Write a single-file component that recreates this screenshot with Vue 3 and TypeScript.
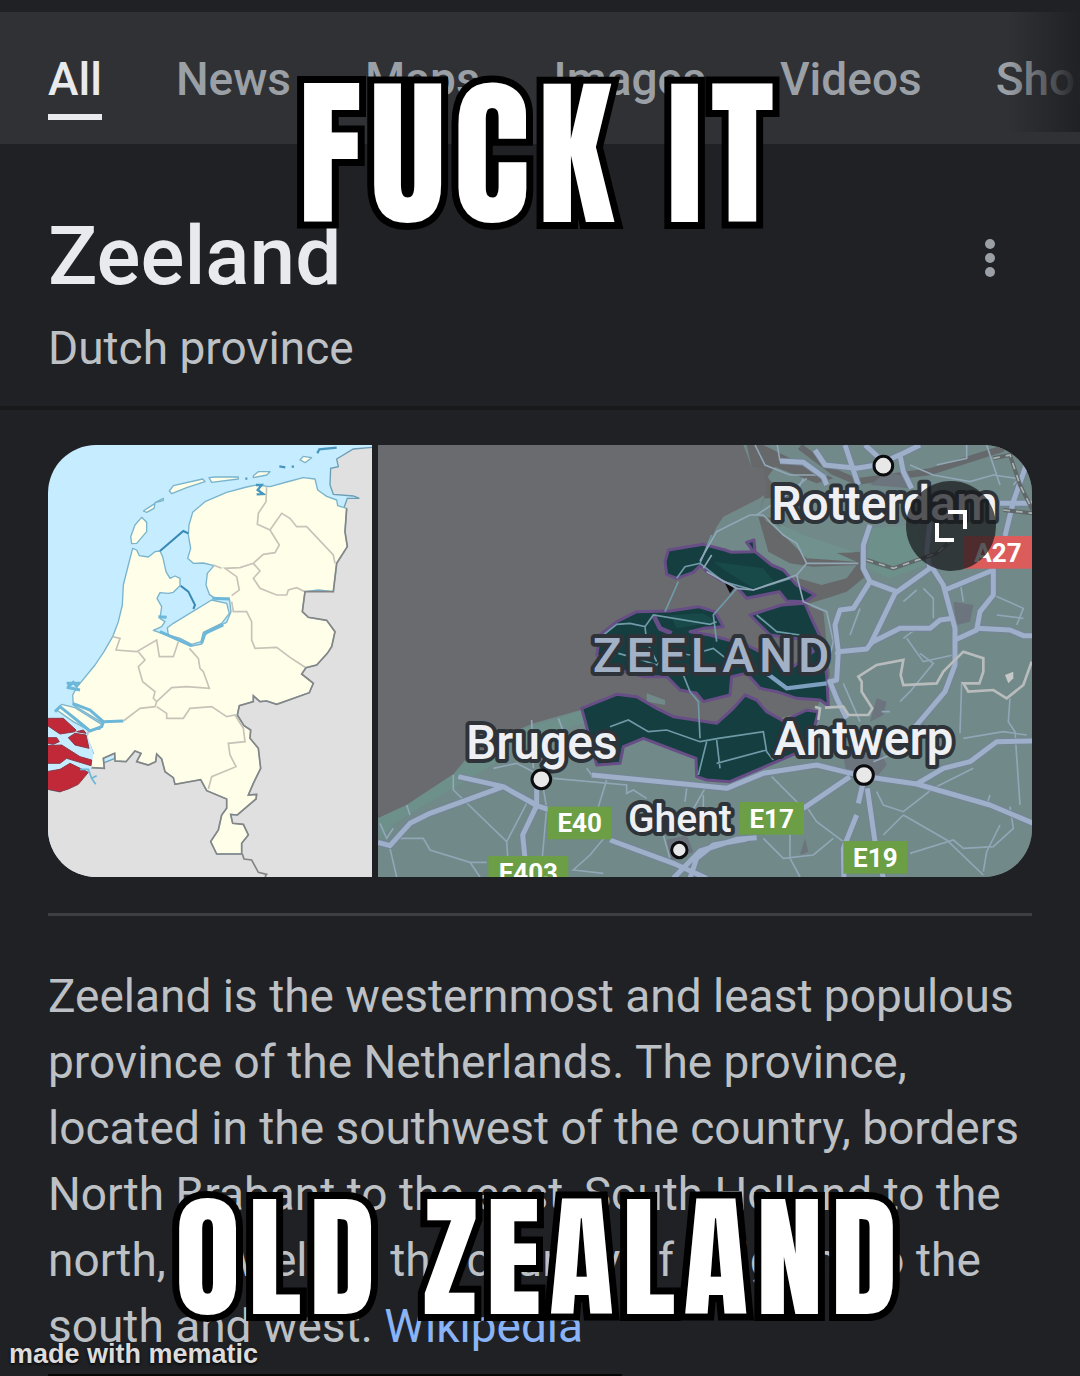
<script setup lang="ts">
interface Tab {
  label: string
  active?: boolean
}

interface Place {
  name: string
  x: number
  y: number
  size: number
  dot: { x: number; y: number; r: number }
}

interface Shield {
  name: string
  x: number
  y: number
  width: number
  color: string
}

const tabs: Tab[] = [
  { label: 'All', active: true },
  { label: 'News' },
  { label: 'Maps' },
  { label: 'Images' },
  { label: 'Videos' },
  { label: 'Shopping' },
]

const places: Place[] = [
  { name: 'Rotterdam', x: 1204, y: 256, size: 144, dot: { x: 1540, y: 92, r: 28 } },
  { name: 'Bruges', x: 288, y: 972, size: 144, dot: { x: 514, y: 1033, r: 28 } },
  { name: 'Antwerp', x: 1212, y: 959, size: 144, dot: { x: 1482, y: 1020, r: 28 } },
  { name: 'Ghent', x: 774, y: 1190, size: 117, dot: { x: 928, y: 1245, r: 23 } },
]

const shields: Shield[] = [
  { name: 'E40', x: 533, y: 1115, width: 192, color: '#6b9e45' },
  { name: 'E403', x: 355, y: 1263, width: 240, color: '#6b9e45' },
  { name: 'E17', x: 1108, y: 1101, width: 194, color: '#6b9e45' },
  { name: 'E19', x: 1420, y: 1218, width: 192, color: '#6b9e45' },
  { name: 'A27', x: 1782, y: 303, width: 204, color: '#dc5b5b' },
]

// Motorways on the regional map
const motorways: string[] = [
  'M24 1222 60 1232 120 1165 180 1135 400 1055 500 1110 M265 1025 400 1055 500 1112 540 1125 M720 1215 910 1285 1010 1330',
  'M500 1112 458 1200 465 1270 M500 1112 500 1060',
  'M665 1020 950 1048 1070 1060 1180 1015 1340 990 1430 1012 1490 1025 1640 1047 1860 1110 1990 1165',
  'M1640 1047 1720 1000 1800 980 1880 920 1990 918',
  'M1300 1120 1440 1025 M1130 1212 1030 1230 980 1270 960 1330 M1160 1208 1100 1213 990 1248 910 1330',
  'M1480 1040 1465 1105 M1460 1140 1420 1240 1422 1330 M1492 1060 1515 1220 1540 1330',
  'M1430 850 1400 790 1380 740 1400 735 1405 650 1395 570 1410 525 1450 520 1500 440 1480 400 1480 330 1500 270',
  'M1500 440 1580 470 M1500 630 1575 475 1680 400 M1680 400 1670 350 1680 260',
  'M1685 395 1720 450 1755 580 1755 690 1725 770 1640 870 1590 920 M1725 465 1870 405 1870 480 1830 530 1820 585 1755 615',
  'M1500 625 1590 580 1680 580 1710 555 1750 550 M1820 580 1920 585 1960 602 1990 602',
  'M1905 303 1930 200 1965 100 1990 60 M1890 205 1990 205',
  'M1230 78 1300 82 1360 125 1370 150 M1335 45 1365 90 1460 100 1520 90 1600 55 1650 30 M1425 30 1465 150 M1485 30 1540 80 M1590 60 1600 110 1625 160 M1400 660 1405 650 1490 642 1515 610',
]

// Secondary roads and waterways
const minorRoads: string[] = [
  'M110 1110 120 1140 M30 1165 50 1210 70 1180 M90 1210 160 1210 180 1245 300 1282 350 1282 M60 1240 80 1326 M300 1282 330 1326',
  'M250 1020 250 1065 410 1220 415 1290 M410 1220 470 1105 M485 855 490 1000 M520 1060 530 1120 515 1290',
  'M550 1030 770 1050 770 1075 790 1065 830 1090 M710 1035 685 1115 M710 1200 660 1260 610 1305 700 1315 M650 1000 665 1020',
  'M370 1000 440 985 490 1010 M565 850 580 890 M880 1200 900 1270 M950 1060 945 1100 M1005 1060 960 1140 M1000 1080 1000 1190 1070 1160',
  'M1205 1025 1280 1100 1260 1160 1260 1270 1290 1326 M1180 1210 1240 1270 1330 1260 1390 1210 M1310 1115 1340 1160 1420 1220',
  'M1520 1070 1540 1110 1600 1130 1690 1060 1810 1000 M1600 1140 1730 1215 1840 1320 M1600 1140 1540 1200 M1620 1255 1750 1215 1780 1240 1870 1235 1930 1180 1920 1115',
  'M1840 1310 1850 1250 1890 1170 M1860 1080 1850 1110 M1950 1110 1935 890 1915 860 1920 790 M1780 910 1900 890 1970 900 M1770 895 1775 740',
  'M1650 655 1690 685 1620 770 1590 800 M1420 745 1470 860 M1535 830 1560 830 M1575 915 1560 960 1510 980',
  'M1025 360 1000 400 M990 378 1040 290 1140 240 1180 240 1240 300 1280 325 1310 385 1465 385 M1160 240 1250 180 1310 130 M1310 385 1280 420 1150 465 1100 460 1010 410',
  'M1155 30 1185 90 1260 120 1370 120 M1700 90 1790 70 1790 30 M1620 90 1690 120 1800 140 1870 120 1940 130 M1850 30 1890 150',
  'M1380 660 1390 620 1370 530 1300 500 1280 420 M1660 460 1690 490 1690 550 M1770 440 1780 500 M1870 480 1960 520 1940 570 M1880 540 1960 550 M1610 610 1660 680 1750 660',
  'M1220 20 1230 78 M1640 465 1600 500 M1440 600 1470 520 M1930 150 1990 80 M1600 610 1640 580 M1300 130 1270 190',
]

const provinceRoads: string[] = [
  'M920 430 945 395 990 385 1025 300 M990 385 1060 440 1150 465 1260 430 M1100 460 1030 540 1040 620',
  'M700 600 740 568 780 565 825 575 850 540 1020 568 1040 560 M825 575 830 620 860 680 M885 530 925 440',
  'M745 655 800 670 860 690 900 650 960 660 1030 640 1080 680 M940 720 960 770 985 800 990 910',
  'M720 875 775 855 835 890 890 885 990 920 1045 910 1180 890 1190 950 1210 975 M1040 915 1050 1000 M1010 920 985 1020 M1040 985 1190 945',
  'M1160 540 1220 590 1290 600',
]
</script>

<template>
  <main class="page">
    <nav class="tabs" aria-label="Search categories">
      <a
        v-for="tab in tabs"
        :key="tab.label"
        href="#"
        class="tab"
        :class="{ active: tab.active }"
        :aria-current="tab.active ? 'page' : undefined"
      >{{ tab.label }}</a>
    </nav>

    <header class="heading">
      <div class="titles">
        <h1>Zeeland</h1>
        <p class="subtitle">Dutch province</p>
      </div>
      <button class="more" type="button" aria-label="More options">
        <svg viewBox="0 0 12 38" aria-hidden="true">
          <circle cx="6" cy="5" r="5" />
          <circle cx="6" cy="19" r="5" />
          <circle cx="6" cy="33" r="5" />
        </svg>
      </button>
    </header>

    <section class="knowledge">
      <div class="maps">
        <!-- Locator map of the Netherlands -->
        <svg class="locator" viewBox="24 30 972 1296" preserveAspectRatio="xMidYMid slice" role="img" aria-label="Zeeland in the Netherlands">
          <rect x="24" y="30" width="972" height="1296" fill="#c6ecff" />
          <path
            d="M10 1060 60 1070 155 998 400 900 900 230 912 218 922 190 958 190 940 183 880 178 870 150 872 100 895 95 890 72 940 42 1010 36V1340H10Z"
            fill="#e0e0e0" stroke="#6b9db5" stroke-width="4"
          />
          <path
            class="coast"
            d="M278 340 290 345 298 362 325 366 345 350 360 348 368 365 378 410 390 430 405 423 420 430 420 452 400 472 385 475 360 473 351 490 365 515 360 550 375 560 365 575 340 586 380 600 412 612 455 633 485 627 492 602 520 580 560 562 573 530 568 490 525 490 508 478 498 450 502 415 522 392 490 384 460 385 443 370 452 340 445 300 447 270 458 232 495 200 560 172 620 156 650 150 690 155 740 141 790 128 825 132 833 165 860 184 890 195 893 212 920 220 915 290 922 335 890 385 880 470 835 465 795 470 787 530 805 547 860 556 885 590 875 635 862 655 830 690 798 698 785 717 820 745 808 773 710 808 680 798 660 800 640 782 640 800 598 812 592 840 612 872 632 885 630 910 655 940 662 1000 640 1045 625 1080 650 1078 648 1092 592 1140 572 1138 578 1165 610 1168 625 1200 605 1225 605 1257 530 1257 512 1220 535 1185 545 1140 560 1120 560 1092 500 1067 482 1034 405 1048 400 1028 375 1010 365 972 350 957 347 980 325 990 290 980 303 955 285 948 258 980 225 978 224 955 190 970 193 1000 155 998 145 965 160 955 140 905 145 890 190 865 100 810 98 780 112 755 165 690 192 650 218 605 235 560 247 510 250 450 265 390Z"
          />
          <path class="coast" d="M382 578 400 565 515 495 560 505 568 535 545 565 490 592 483 620 455 628 420 610 385 600Z" />
          <path class="coast" d="M305 247 320 262 320 290 290 325 275 326 272 305 285 270ZM388 168 400 152 488 132 495 140 440 158 395 176ZM507 128 525 126 595 126 595 132 515 142ZM310 228 345 205 342 220 320 232ZM345 203 370 190 370 197ZM640 122 655 110 690 110 680 120 640 128ZM780 75 790 64 815 68 795 83ZM50 825 65 808 105 818 185 868 180 882 145 885 100 860Z" />
          <path d="M718 94 736 97M755 95 762 95M832 55 838 43 890 38M616 131 622 131M648 150 665 150 653 165 670 177 650 178" fill="none" stroke="#4796bd" stroke-width="7" />
          <path d="M360 348 430 288 445 295 M422 452 445 470 465 510 460 522" fill="none" stroke="#3789b4" stroke-width="6" />
          <path d="M98 805 150 825 190 860 250 858M85 755 100 742 112 755M80 745 120 745M80 757 120 765M45 830 60 815 110 855 150 888 185 875 190 862M517 490 570 492M355 545 380 547M485 625 495 595 550 570M360 590 455 633" fill="none" stroke="#6db7d8" stroke-width="9" />
          <path
            d="M140 905 145 890M680 155 678 200 655 235 652 268 690 285 718 330 705 353 670 358 640 385 600 398 555 400 590 425 598 465 575 482M545 400 520 390M690 285 725 235 750 250 770 275 800 275 880 360 885 385M640 385 660 408 640 430 660 460 710 480 740 480 745 465 770 458 795 470M575 500 580 530 620 530 635 560 635 615 645 640 710 637 750 667 785 690 798 698M218 605 240 610 228 645 290 650 350 615 358 665 400 665 415 620M448 640 475 670 480 700 490 710 508 760 440 755 395 758 350 800 340 790 345 770 308 740 295 695 315 675 295 650M250 858 300 820 345 815 350 800M350 815 380 835 380 850 430 850 450 820 515 815 560 845 585 840 610 880 615 920 565 925 570 960 588 995 515 1025 505 1062"
            fill="none" stroke="#c8c3b9" stroke-width="5"
          />
          <path
            d="M920 220 915 290 922 335 890 385 880 470 795 470 787 530 805 547 860 556 885 590 875 635 862 655 830 690 798 698 785 717 820 745 808 773 710 808 680 798 660 800 640 782 640 800 598 812 592 840 612 872 632 885 630 910 655 940 662 1000 640 1045 625 1080 650 1078 648 1092 592 1140 572 1138 578 1165 610 1168 625 1200 605 1225 605 1257 530 1257 512 1220 535 1185 545 1140 560 1120 560 1092 500 1067 482 1034 405 1048 400 1028 375 1010 365 972 350 957 347 980 325 990 290 980 303 955 285 948 258 980 225 978 224 955 190 970 193 1000 155 998M607 1257 612 1272 635 1275 655 1312 680 1318 675 1326"
            fill="none" stroke="#858585" stroke-width="5"
          />
          <path d="M24 1060 24 850 75 850 110 885 140 895 160 955 155 998 145 1018Z" fill="#c6ecff" />
          <path
            d="M20 850 70 850 108 885 105 890 60 897 20 870ZM20 908 50 908 58 920 40 928 20 925ZM85 908 105 895 138 900 147 940 105 930ZM20 932 65 930 120 965 155 975 153 992 80 970 60 985 20 985ZM20 1010 60 1003 90 985 145 1012 115 1048 85 1062 60 1070 20 1062ZM110 890 138 895 130 885Z"
            fill="#c12838" stroke="#8d3848" stroke-width="3"
          />
          <path d="M120 1003 145 1003 155 1030 167 1048M155 1030 170 1022" fill="none" stroke="#6db7d8" stroke-width="5" />
        </svg>

        <!-- Regional map centred on Zeeland -->
        <div class="region">
          <svg viewBox="24 30 1962 1296" preserveAspectRatio="xMidYMid slice" role="img" aria-label="Map of Zeeland, Rotterdam, Bruges, Ghent and Antwerp">
            <rect x="24" y="30" width="1962" height="1296" fill="#6a6b6e" />
            <path
              d="M24 1150 110 1110 250 1018 285 975 430 890 490 865 650 820 1000 920 1340 800 1350 650 1320 500 990 385 1040 275 1060 245 1165 192 1215 160 1180 105 1145 95 1120 30H1990V1326H24Z"
              fill="#718989"
            />
            <path d="M24 1150 110 1110 250 1018 285 980 430 890 640 825 650 860 480 920 300 1030 80 1160 30 1210ZM1500 280 1640 270 1670 390 1560 430 1490 400Z" fill="#6d908b" />
            <path
              d="M1130 30 1180 30 1260 70 1390 130 1340 145 1215 95 1190 130 1270 190 1180 190 1165 245 1210 250 1370 355 1475 350 1475 390 1485 425 1430 470 1370 490 1320 505 1270 425 1355 450 1430 430 1460 390 1330 395 1260 385 1195 350 1165 245 1190 160 1180 105 1145 95Z"
              fill="#66686a"
            />
            <path d="M1215 258 1250 290 1370 355 1455 352 1420 340 1300 300ZM1180 250 1240 300 1310 370 1460 380 1380 345Z" fill="#70918d" />
            <path d="M1290 35 1390 110 1460 140 1680 110 1900 40" fill="none" stroke="#66696c" stroke-width="20" />
            <path d="M1500 150 1550 110 1610 125 1620 160ZM1750 500 1810 510 1800 560 1760 570ZM1420 960 1520 920 1550 990 1500 1050 1430 1020ZM1520 790 1550 800 1540 840 1500 860ZM890 1215 950 1200 970 1250 900 1280ZM1290 1260 1305 1210 1315 1250Z" fill="#6c747e" />
            <path d="M1360 530 990 385 680 600 640 820 980 920 1340 820 1380 720Z" fill="#6a6b6e" />
            <path d="M830 775 885 795 885 810 830 800Z" fill="#718989" />

            <g class="province">
              <path d="M895 345 1000 328 1065 345 1085 352 1150 350 1130 322 1152 315 1155 350 1205 390 1240 405 1280 450 1335 480 1305 500 1250 498 1228 470 1190 478 1130 490 1105 462 1060 440 1010 410 992 390 970 412 920 430 890 418 885 380Z" />
              <path d="M1140 540 1235 510 1305 505 1320 540 1348 600 1370 720 1375 812 1350 795 1280 790 1220 770 1170 760 1130 715 1085 725 1080 780 1000 800 980 775 930 765 890 725 820 725 730 700 680 660 690 600 740 560 800 530 900 528 985 515 1035 530 1060 575 1000 580 960 590 1020 600 1130 630 1180 655 1270 695 1330 650 1310 615 1200 600Z" />
              <path d="M635 820 740 778 800 785 860 820 910 845 1040 865 1090 820 1125 780 1160 795 1190 830 1240 858 1310 825 1345 830 1335 870 1290 950 1220 980 1150 1010 1080 1040 1010 1035 980 1025 978 970 820 910 760 935 750 985 680 990 650 875Z" />
            </g>
            <path d="M900 540 1000 535 1040 560 980 570 920 580ZM1030 380 1180 400 1220 450 1150 460 1070 410Z" fill="#174a48" />
            <path d="M1065 445 1095 455 1080 475Z" fill="#0d0d12" />
            <path d="M850 540 870 580 905 595" fill="none" stroke="#684e86" stroke-width="14" />
            <path v-for="d in provinceRoads" :key="d" :d="d" class="province-road" />
            <path d="M1190 715 1250 760 1370 745" fill="none" stroke="#7d9fc0" stroke-width="13" />
            <path v-for="d in minorRoads" :key="d" :d="d" class="minor" />
            <path v-for="d in motorways" :key="d" :d="d" class="motorway-edge" />
            <path v-for="d in motorways" :key="d + 'fill'" :d="d" class="motorway" />
            <path d="M1335 815 1350 820 1345 855M1365 818 1420 815 1435 840 1495 840 1507 820 1475 770 1475 740 1465 725 1520 690 1600 675 1592 720 1600 750 1700 745 1720 710 1780 650 1840 670 1840 710 1828 745 1780 745 1795 770 1870 765 1910 790 1960 750 1985 680" fill="none" stroke="#b9bcbd" stroke-width="8" />
            <path d="M1905 720 1930 710 1930 730 1915 745Z" fill="#c6c8c8" />
            <path d="M1490 375 1570 400 1700 355 1740 320M1870 70 1920 60 1950 150 1990 230M1900 225 1990 235" class="rail-bed" />
            <path d="M1490 375 1570 400 1700 355 1740 320M1870 70 1920 60 1950 150 1990 230M1900 225 1990 235" class="rail" />

            <text class="province-name" x="668" y="711">ZEELAND</text>

            <g v-for="place in places" :key="place.name">
              <text class="place" :x="place.x" :y="place.y" :font-size="place.size">{{ place.name }}</text>
              <circle :cx="place.dot.x" :cy="place.dot.y" :r="place.dot.r" fill="#e8e8e8" stroke="#0c0c0e" stroke-width="9" />
            </g>

            <g v-for="shield in shields" :key="shield.name">
              <rect :x="shield.x" :y="shield.y" :width="shield.width" height="98" :fill="shield.color" />
              <text class="shield" :x="shield.x + shield.width / 2" :y="shield.y + 77">{{ shield.name }}</text>
            </g>
          </svg>
          <button class="expand" type="button" aria-label="Expand map">
            <svg viewBox="0 0 32 32" aria-hidden="true">
              <path d="M13 2H30V19M2 13V30H19" fill="none" stroke="#fff" stroke-width="4" />
            </svg>
          </button>
        </div>
      </div>

      <p class="description">
        Zeeland is the westernmost and least populous province of the Netherlands. The province, located in the southwest of the country, borders North Brabant to the east, South Holland to the north, as well as the country of Belgium to the south and west. <a href="#">Wikipedia</a>
      </p>
      <div class="next-edge"></div>
    </section>

    <p class="caption top">FUCK IT</p>
    <p class="caption bottom">OLD ZEALAND</p>
    <small class="watermark">made with mematic</small>
  </main>
</template>

<style>
body {
  margin: 0;
  background: #202124;
}
</style>

<style scoped>
.page {
  position: relative;
  box-sizing: border-box;
  overflow: hidden;
  padding-top: 12px;
  background: #202124;
  color: #bdc1c6;
  font-family: Roboto, "Liberation Sans", sans-serif;
}

.tabs {
  position: relative;
  display: flex;
  gap: 74px;
  height: 132px;
  padding-left: 48px;
  overflow: hidden;
  background: #303134;
}

.tabs::after {
  content: "";
  position: absolute;
  top: 0;
  right: 0;
  width: 72px;
  height: 120px;
  background: linear-gradient(to right, rgba(32, 33, 36, 0), #202124);
}

.tab {
  box-sizing: border-box;
  flex: none;
  height: 108px;
  padding-top: 40px;
  color: #9aa0a6;
  font-size: 46px;
  font-weight: 500;
  line-height: 54px;
  text-decoration: none;
}

.tab.active {
  border-bottom: 6px solid #e8eaed;
  color: #e8eaed;
}

.heading {
  display: flex;
  justify-content: space-between;
  padding: 66px 84px 32px 48px;
  border-bottom: 4px solid #18191b;
}

h1 {
  margin: 0;
  color: #e8eaed;
  font-size: 82px;
  font-weight: 500;
  line-height: 92px;
}

.subtitle {
  margin: 20px 0 0;
  font-size: 46px;
  line-height: 52px;
}

.more {
  width: 12px;
  height: 38px;
  margin-top: 29px;
  padding: 0;
  border: 0;
  background: none;
}

.more svg {
  display: block;
  fill: #9aa0a6;
}

.knowledge {
  padding: 35px 48px 0;
}

.maps {
  display: flex;
  gap: 6px;
  height: 432px;
  overflow: hidden;
  border-radius: 48px;
}

.locator {
  flex: 324 1 0;
  min-width: 0;
  height: 100%;
}

.region {
  position: relative;
  flex: 654 1 0;
  min-width: 0;
}

.region > svg {
  display: block;
  width: 100%;
  height: 100%;
}

.coast {
  fill: #fefee9;
  stroke: #79b4cc;
  stroke-width: 4;
  stroke-linejoin: round;
}

.province path {
  fill: #153e41;
  stroke: #684e86;
  stroke-width: 9;
  stroke-linejoin: round;
}

.province-road {
  fill: none;
  stroke: #6f9aa8;
  stroke-width: 5;
}

.minor {
  fill: none;
  stroke: #91a6b6;
  stroke-width: 5;
}

.motorway-edge,
.motorway {
  fill: none;
  stroke: #758399;
  stroke-linejoin: round;
  stroke-width: 20;
}

.motorway {
  stroke: #9dafc9;
  stroke-width: 15;
}

.rail-bed,
.rail {
  fill: none;
  stroke: #5f6769;
  stroke-width: 12;
}

.rail {
  stroke: #aab2b2;
  stroke-dasharray: 20 18;
  stroke-width: 5;
}

.place,
.province-name {
  fill: #eef0f4;
  stroke: #2d3338;
  stroke-width: 24;
  stroke-linejoin: round;
  paint-order: stroke;
  font-weight: 500;
}

.province-name {
  fill: #a3b1c6;
  font-size: 144px;
  letter-spacing: 15px;
}

.shield {
  fill: #fff;
  font-size: 78px;
  font-weight: 700;
  text-anchor: middle;
}

.expand {
  position: absolute;
  top: 36px;
  right: 36px;
  display: grid;
  place-items: center;
  width: 90px;
  height: 90px;
  padding: 0;
  border: 0;
  border-radius: 50%;
  background: rgba(24, 25, 28, 0.72);
}

.expand svg {
  width: 32px;
  height: 32px;
}

.description {
  margin: 36px 0 0;
  padding-top: 47px;
  border-top: 3px solid #3c4043;
  font-size: 46px;
  line-height: 66px;
}

.description a {
  color: #8ab4f8;
  text-decoration: none;
}

.next-edge {
  width: 574px;
  height: 2px;
  margin-top: 15px;
  background: #050506;
}

.caption {
  position: absolute;
  right: 0;
  left: 0;
  margin: 0;
  color: #fff;
  font-family: Anton, Oswald, Impact, "Liberation Sans", sans-serif;
  font-weight: 400;
  letter-spacing: 8px;
  line-height: 1;
  text-align: center;
  -webkit-text-stroke: 14px #000;
  paint-order: stroke fill;
}

.caption.top {
  top: 75px;
  font-size: 160px;
}

.caption.bottom {
  bottom: 52px;
  font-size: 134px;
}

.watermark {
  position: absolute;
  bottom: 6px;
  left: 9px;
  color: #dcdcdc;
  font-family: "Liberation Sans", sans-serif;
  font-size: 27px;
  font-weight: 700;
  line-height: 32px;
  text-shadow: 0 1px 3px #000;
}
</style>
